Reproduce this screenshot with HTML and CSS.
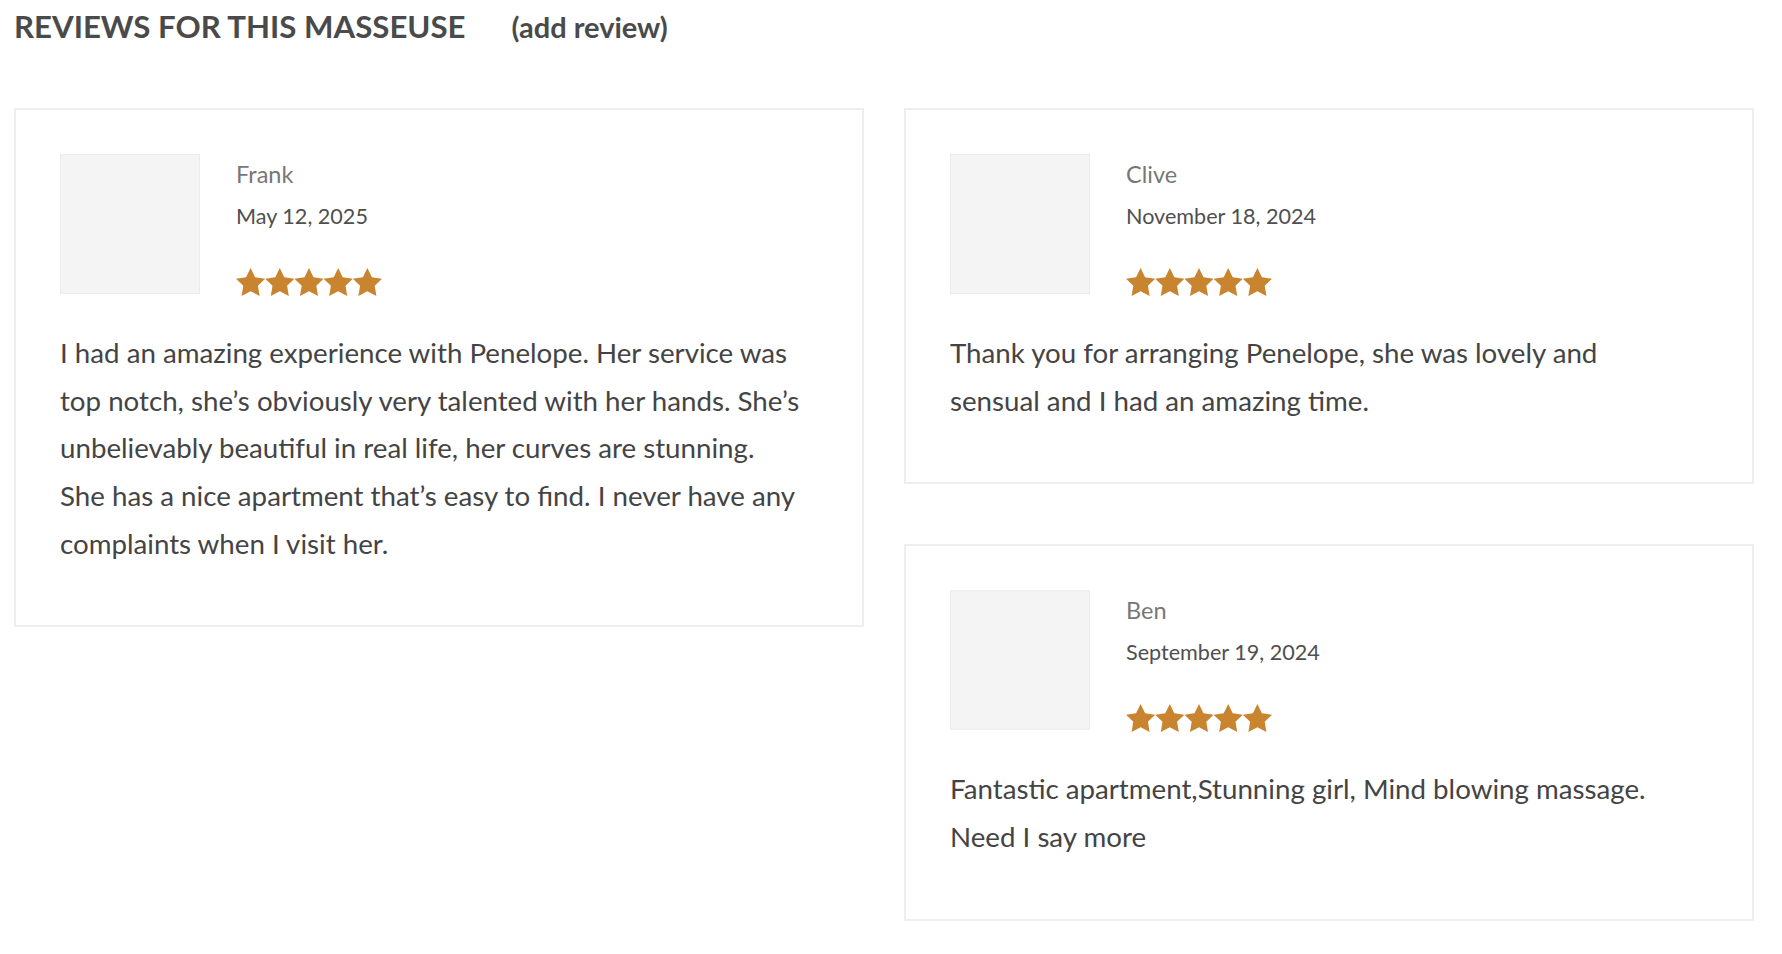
FILE: index.html
```html
<!DOCTYPE html>
<html lang="en">
<head>
<meta charset="utf-8">
<title>Reviews</title>
<link rel="stylesheet" href="styles.css">
</head>
<body>
<div class="page">
  <div class="heading-row">
    <h2 class="heading">REVIEWS FOR THIS MASSEUSE</h2>
    <a class="add-review" href="#">(add review)</a>
  </div>
  <div class="reviews">
    <div class="col">
      <div class="card">
        <div class="card-head">
          <div class="avatar"></div>
          <div class="meta">
            <div class="name">Frank</div>
            <div class="date">May 12, 2025</div>
            <svg class="stars" width="146" height="28" viewBox="0 0 100 19.02" aria-hidden="true">
              <g fill="#c98430">
                <path d="M10 0l3.09 6.26L20 7.27l-5 4.87 1.18 6.88L10 15.77l-6.18 3.25L5 12.14 0 7.27l6.91-1.01z"/>
                <path transform="translate(20 0)" d="M10 0l3.09 6.26L20 7.27l-5 4.87 1.18 6.88L10 15.77l-6.18 3.25L5 12.14 0 7.27l6.91-1.01z"/>
                <path transform="translate(40 0)" d="M10 0l3.09 6.26L20 7.27l-5 4.87 1.18 6.88L10 15.77l-6.18 3.25L5 12.14 0 7.27l6.91-1.01z"/>
                <path transform="translate(60 0)" d="M10 0l3.09 6.26L20 7.27l-5 4.87 1.18 6.88L10 15.77l-6.18 3.25L5 12.14 0 7.27l6.91-1.01z"/>
                <path transform="translate(80 0)" d="M10 0l3.09 6.26L20 7.27l-5 4.87 1.18 6.88L10 15.77l-6.18 3.25L5 12.14 0 7.27l6.91-1.01z"/>
              </g>
            </svg>
          </div>
        </div>
        <p class="text">I had an amazing experience with Penelope. Her service was top notch, she’s obviously very talented with her hands. She’s unbelievably beautiful in real life, her curves are stunning. She has a nice apartment that’s easy to find. I never have any complaints when I visit her.</p>
      </div>
    </div>
    <div class="col">
      <div class="card">
        <div class="card-head">
          <div class="avatar"></div>
          <div class="meta">
            <div class="name">Clive</div>
            <div class="date">November 18, 2024</div>
            <svg class="stars" width="146" height="28" viewBox="0 0 100 19.02" aria-hidden="true">
              <g fill="#c98430">
                <path d="M10 0l3.09 6.26L20 7.27l-5 4.87 1.18 6.88L10 15.77l-6.18 3.25L5 12.14 0 7.27l6.91-1.01z"/>
                <path transform="translate(20 0)" d="M10 0l3.09 6.26L20 7.27l-5 4.87 1.18 6.88L10 15.77l-6.18 3.25L5 12.14 0 7.27l6.91-1.01z"/>
                <path transform="translate(40 0)" d="M10 0l3.09 6.26L20 7.27l-5 4.87 1.18 6.88L10 15.77l-6.18 3.25L5 12.14 0 7.27l6.91-1.01z"/>
                <path transform="translate(60 0)" d="M10 0l3.09 6.26L20 7.27l-5 4.87 1.18 6.88L10 15.77l-6.18 3.25L5 12.14 0 7.27l6.91-1.01z"/>
                <path transform="translate(80 0)" d="M10 0l3.09 6.26L20 7.27l-5 4.87 1.18 6.88L10 15.77l-6.18 3.25L5 12.14 0 7.27l6.91-1.01z"/>
              </g>
            </svg>
          </div>
        </div>
        <p class="text">Thank you for arranging Penelope, she was lovely and sensual and I had an amazing time.</p>
      </div>
      <div class="card">
        <div class="card-head">
          <div class="avatar"></div>
          <div class="meta">
            <div class="name">Ben</div>
            <div class="date">September 19, 2024</div>
            <svg class="stars" width="146" height="28" viewBox="0 0 100 19.02" aria-hidden="true">
              <g fill="#c98430">
                <path d="M10 0l3.09 6.26L20 7.27l-5 4.87 1.18 6.88L10 15.77l-6.18 3.25L5 12.14 0 7.27l6.91-1.01z"/>
                <path transform="translate(20 0)" d="M10 0l3.09 6.26L20 7.27l-5 4.87 1.18 6.88L10 15.77l-6.18 3.25L5 12.14 0 7.27l6.91-1.01z"/>
                <path transform="translate(40 0)" d="M10 0l3.09 6.26L20 7.27l-5 4.87 1.18 6.88L10 15.77l-6.18 3.25L5 12.14 0 7.27l6.91-1.01z"/>
                <path transform="translate(60 0)" d="M10 0l3.09 6.26L20 7.27l-5 4.87 1.18 6.88L10 15.77l-6.18 3.25L5 12.14 0 7.27l6.91-1.01z"/>
                <path transform="translate(80 0)" d="M10 0l3.09 6.26L20 7.27l-5 4.87 1.18 6.88L10 15.77l-6.18 3.25L5 12.14 0 7.27l6.91-1.01z"/>
              </g>
            </svg>
          </div>
        </div>
        <p class="text">Fantastic apartment,Stunning girl, Mind blowing massage. Need I say more</p>
      </div>
    </div>
  </div>
</div>
</body>
</html>
```

FILE: styles.css
```css
html, body {
  margin: 0;
  padding: 0;
  background: #ffffff;
}

body {
  font-family: Lato, "Open Sans", "Liberation Sans", sans-serif;
  color: #444444;
}

.page {
  padding: 8px 28px 0 14px;
}

.heading-row {
  display: flex;
  align-items: baseline;
  gap: 46px;
  margin-bottom: 64px;
}

.heading {
  margin: 0;
  font-size: 31.2px;
  font-weight: 700;
  line-height: 36px;
  color: #4a4a4a;
}

.add-review {
  font-size: 29px;
  font-weight: 700;
  color: #4a4a4a;
  text-decoration: none;
}

.reviews {
  display: grid;
  grid-template-columns: 850px 850px;
  column-gap: 40px;
  align-items: start;
}

.col {
  display: flex;
  flex-direction: column;
  gap: 60px;
}

.card {
  border: 2px solid #eeeeee;
  padding: 44px 44px 58px 44px;
}

.card-head {
  display: flex;
  gap: 36px;
  margin-bottom: 33px;
}

.avatar {
  width: 138px;
  height: 138px;
  flex: none;
  border: 1px solid #ececec;
  background: #f4f4f4;
}

.meta {
  display: flex;
  flex-direction: column;
  align-items: flex-start;
}

.name {
  font-size: 23.5px;
  line-height: 40px;
  color: #777777;
}

.date {
  font-size: 21.6px;
  line-height: 40px;
  margin-top: 2px;
  color: #4f4f4f;
}

.stars {
  display: block;
  margin-top: 32px;
}

.text {
  margin: 0;
  font-size: 27.7px;
  line-height: 47.67px;
  color: #444444;
  max-width: 741px;
}
```
